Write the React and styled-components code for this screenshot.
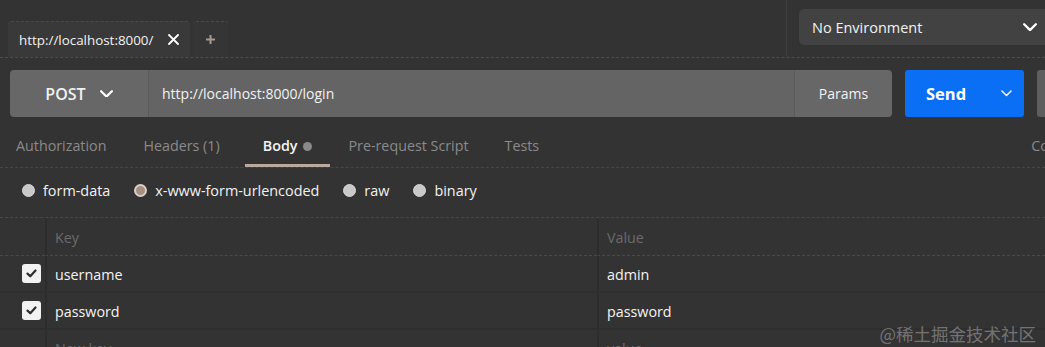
import React from "react";
import styled, { createGlobalStyle } from "styled-components";

const Global = createGlobalStyle`
  html, body { margin: 0; padding: 0; background: #333333; }
  body { font-family: "Open Sans", "Noto Sans", sans-serif; color: #f2f2f2; overflow: hidden; }
  * { box-sizing: border-box; }
`;

const Page = styled.div`
  width: 1045px;
  height: 347px;
  position: relative;
  overflow: hidden;
  background: #333333;
`;

const TopBar = styled.div`
  height: 58px;
  display: flex;
  align-items: flex-end;
  border-bottom: 1px dashed #4c4c4c;
`;

const Tabs = styled.div`
  flex: 0 0 787px;
  display: flex;
  gap: 3px;
  padding-left: 8px;
  height: 100%;
  align-items: flex-end;
  border-right: 1px solid #3e3e3e;
`;

const Tab = styled.div`
  height: 36px;
  display: flex;
  align-items: center;
  gap: 15px;
  padding: 0 ${p => (p.$plus ? "12px" : "11px")};
  background: ${p => (p.$plus ? "#353535" : "#393939")};
  border-top: 1px dashed #4a4a4a;
  border-radius: 3px 3px 0 0;
  font-size: 13.4px;
  color: ${p => (p.$plus ? "#a39a92" : "#f2f2f2")};
`;

const EnvWrap = styled.div`
  flex: 1;
  min-width: 0;
  height: 100%;
  padding: 9px 0 0 12px;
`;

const Env = styled.div`
  height: 36px;
  width: 270px;
  background: #424242;
  border-radius: 5px;
  display: flex;
  align-items: center;
  padding: 0 0 0 13px;
  font-size: 14.5px;
  gap: 101px;
`;

const RequestBar = styled.div`
  display: flex;
  margin: 12px 0 0 10px;
  height: 47px;
`;

const Method = styled.div`
  width: 139px;
  background: #676767;
  border-radius: 4px 0 0 4px;
  display: flex;
  align-items: center;
  justify-content: center;
  gap: 14px;
  font-size: 16px;
  font-weight: 600;
  border-right: 1px solid #5a5a5a;
`;

const Url = styled.div`
  width: 646px;
  background: #646464;
  display: flex;
  align-items: center;
  padding-left: 13px;
  font-size: 14px;
  border-right: 1px solid #5b5b5b;
`;

const Params = styled.div`
  width: 97px;
  background: #676767;
  border-radius: 0 4px 4px 0;
  display: flex;
  align-items: center;
  justify-content: center;
  font-size: 14px;
`;

const Send = styled.div`
  margin-left: 13px;
  width: 119px;
  background: #0a6ff5;
  border-radius: 3px;
  display: flex;
  align-items: center;
  justify-content: space-between;
  padding: 0 12px 0 21px;
  font-size: 16.5px;
  font-weight: 700;
  color: #fff;
`;

const More = styled.div`
  margin-left: 13px;
  flex: 1;
  background: #5e5e5e;
  border-radius: 3px 0 0 3px;
`;

const SubTabs = styled.div`
  display: flex;
  height: 51px;
  padding-left: 16px;
  border-bottom: 1px dashed #474747;
  align-items: stretch;
`;

const SubTab = styled.div`
  display: flex;
  align-items: center;
  gap: 6px;
  font-size: 14.3px;
  white-space: nowrap;
  color: ${p => (p.$active ? "#f4f4f4" : "#8a8a8a")};
  font-weight: ${p => (p.$active ? 600 : 400)};
  margin-right: ${p => p.$mr}px;
  padding: 10px ${p => (p.$active ? "18px" : "0")} 0;
  border-bottom: 3px solid ${p => (p.$active ? "#baa99c" : "transparent")};
`;

const Dot = styled.span`
  width: 9px;
  height: 9px;
  border-radius: 50%;
  background: #8a8a8a;
  margin-top: 2px;
`;

const Radios = styled.div`
  display: flex;
  align-items: center;
  height: 50px;
  padding: 0 0 5px 22px;
  border-bottom: 1px dashed #474747;
  gap: 24px;
`;

const Radio = styled.label`
  display: flex;
  align-items: center;
  gap: 8px;
  font-size: 14.4px;
  color: #f2f2f2;
`;

const Circle = styled.span`
  width: 13px;
  height: 13px;
  border-radius: 50%;
  background: ${p => (p.$on ? "#a78f80" : "#c9c9c9")};
  border: ${p => (p.$on ? "2px solid #d9d0c8" : "1px solid #d6d6d6")};
`;

const Table = styled.div`
  display: grid;
  grid-template-columns: 45px 552px 1fr;
`;

const Cell = styled.div`
  height: ${p => (p.$head ? 38 : 37)}px;
  display: flex;
  align-items: center;
  justify-content: ${p => (p.$check ? "flex-end" : "flex-start")};
  padding: ${p => (p.$check ? "0 4px 0 0" : "1px 0 0 8px")};
  border-left: ${p => (p.$check ? "none" : "2px solid #2d2d2d")};
  border-bottom: ${p => (p.$head ? "1px dashed #4a4a4a" : "2px solid #2e2e2e")};
  font-size: 14.3px;
  color: ${p => (p.$muted ? "#6b6b6b" : "#f4f4f4")};
  font-weight: ${p => (p.$muted ? 400 : 500)};
`;

const Check = styled.span`
  width: 19px;
  height: 19px;
  border-radius: 3px;
  background: #f2f2f2;
  display: flex;
  align-items: center;
  justify-content: center;
`;

const Watermark = styled.div`
  position: absolute;
  right: 9px;
  bottom: 5px;
  font-family: "Noto Sans CJK SC", "Noto Sans", sans-serif;
  font-size: 17.5px;
  line-height: 1;
  color: rgba(255, 255, 255, 0.32);
`;

const Chevron = ({ size = 12, color = "#fff", w = 2 }) => (
  <svg width={size} height={size * 0.6} viewBox="0 0 12 7" fill="none">
    <path d="M1 1l5 5 5-5" stroke={color} strokeWidth={w} strokeLinecap="round" strokeLinejoin="round" />
  </svg>
);

const Tick = () => (
  <svg width="11" height="9" viewBox="0 0 11 9" fill="none">
    <path d="M1.5 4.6l2.8 2.7L9.5 1.5" stroke="#2e2e2e" strokeWidth="2.2" strokeLinecap="round" strokeLinejoin="round" />
  </svg>
);

const rows = [
  { key: "username", value: "admin" },
  { key: "password", value: "password" },
];

export default function App() {
  return (
    <Page>
      <Global />
      <TopBar>
        <Tabs>
          <Tab>
            <span>http://localhost:8000/</span>
            <svg width="11" height="11" viewBox="0 0 11 11">
              <path d="M1 1l9 9M10 1l-9 9" stroke="#fff" strokeWidth="1.8" strokeLinecap="round" />
            </svg>
          </Tab>
          <Tab $plus>
            <svg width="11" height="11" viewBox="0 0 11 11">
              <path d="M5.5 1v9M1 5.5h9" stroke="#a39a92" strokeWidth="2" />
            </svg>
          </Tab>
        </Tabs>
        <EnvWrap>
          <Env>
            <span>No Environment</span>
            <Chevron size={14} w={2} />
          </Env>
        </EnvWrap>
      </TopBar>

      <RequestBar>
        <Method>
          <span>POST</span>
          <Chevron size={13} w={2} />
        </Method>
        <Url>http://localhost:8000/login</Url>
        <Params>Params</Params>
        <Send>
          <span>Send</span>
          <Chevron size={11} w={1.6} />
        </Send>
        <More />
      </RequestBar>

      <SubTabs>
        <SubTab $mr={37}>Authorization</SubTab>
        <SubTab $mr={25}>Headers (1)</SubTab>
        <SubTab $active $mr={18}>
          Body <Dot />
        </SubTab>
        <SubTab $mr={36}>Pre-request Script</SubTab>
        <SubTab $mr={492}>Tests</SubTab>
        <SubTab $mr={0}>Co</SubTab>
      </SubTabs>

      <Radios>
        <Radio><Circle />form-data</Radio>
        <Radio><Circle $on />x-www-form-urlencoded</Radio>
        <Radio><Circle />raw</Radio>
        <Radio><Circle />binary</Radio>
      </Radios>

      <Table>
        <Cell $check $head />
        <Cell $head $muted>Key</Cell>
        <Cell $head $muted>Value</Cell>
        {rows.map(r => (
          <React.Fragment key={r.key}>
            <Cell $check><Check><Tick /></Check></Cell>
            <Cell>{r.key}</Cell>
            <Cell>{r.value}</Cell>
          </React.Fragment>
        ))}
        <Cell $check />
        <Cell $muted>New key</Cell>
        <Cell $muted>value</Cell>
      </Table>

      <Watermark>@稀土掘金技术社区</Watermark>
    </Page>
  );
}
